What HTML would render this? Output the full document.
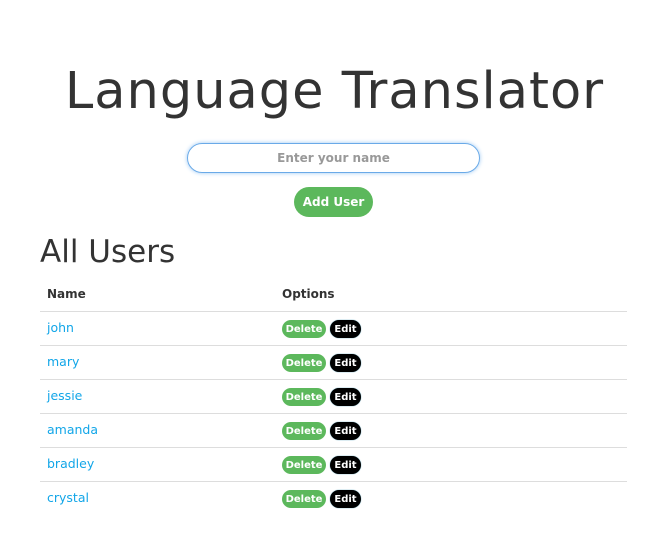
<!DOCTYPE html>
<html><head><style>
body{margin:0;background:#fff;font-family:"DejaVu Sans","Liberation Sans",sans-serif;color:#333;width:669px;height:540px;position:relative;overflow:hidden}
.a{position:absolute}
h1{position:absolute;top:62px;left:0;width:669px;text-align:center;margin:0;font-weight:normal;font-size:51px;letter-spacing:1px;color:#333}
.inp{left:187px;top:143px;width:291px;height:28px;border:1px solid #6aaae8;border-radius:15px;box-shadow:0 0 4px #9cc8f3;text-align:center;font-size:12px;font-weight:bold;color:#999;line-height:28px}
.add{left:294px;top:187px;width:79px;height:30px;border-radius:15px;background:#5cb85c;color:#fff;font-size:12px;font-weight:bold;text-align:center;line-height:30px}
h2{position:absolute;left:40px;top:234px;margin:0;font-weight:normal;font-size:31px;color:#333}
.th{font-size:12px;font-weight:bold;color:#333;top:287px}
.line{left:40px;width:587px;height:1px;background:#ddd}
.nm{left:47px;font-size:12.5px;color:#12a6e8}
.del,.ed{box-sizing:border-box;padding-top:2px;height:18px;border-radius:9px;color:#fff;font-size:10px;font-weight:bold;line-height:16px;text-align:center}
.del{left:282px;width:44px;background:#5cb85c}
.ed{left:330px;width:31px;background:#000;box-shadow:0 0 1px #28a}
</style></head><body>
<h1>Language Translator</h1>
<div class="a inp">Enter your name</div>
<div class="a add">Add User</div>
<h2>All Users</h2>
<div class="a th" style="left:47px">Name</div>
<div class="a th" style="left:282px">Options</div>
<div class="a line" style="top:311px"></div>
<div class="a nm" style="top:320px">john</div><div class="a del" style="top:320px">Delete</div><div class="a ed" style="top:320px">Edit</div>
<div class="a line" style="top:345px"></div>
<div class="a nm" style="top:354px">mary</div><div class="a del" style="top:354px">Delete</div><div class="a ed" style="top:354px">Edit</div>
<div class="a line" style="top:379px"></div>
<div class="a nm" style="top:388px">jessie</div><div class="a del" style="top:388px">Delete</div><div class="a ed" style="top:388px">Edit</div>
<div class="a line" style="top:413px"></div>
<div class="a nm" style="top:422px">amanda</div><div class="a del" style="top:422px">Delete</div><div class="a ed" style="top:422px">Edit</div>
<div class="a line" style="top:447px"></div>
<div class="a nm" style="top:456px">bradley</div><div class="a del" style="top:456px">Delete</div><div class="a ed" style="top:456px">Edit</div>
<div class="a line" style="top:481px"></div>
<div class="a nm" style="top:490px">crystal</div><div class="a del" style="top:490px">Delete</div><div class="a ed" style="top:490px">Edit</div>
</body></html>
